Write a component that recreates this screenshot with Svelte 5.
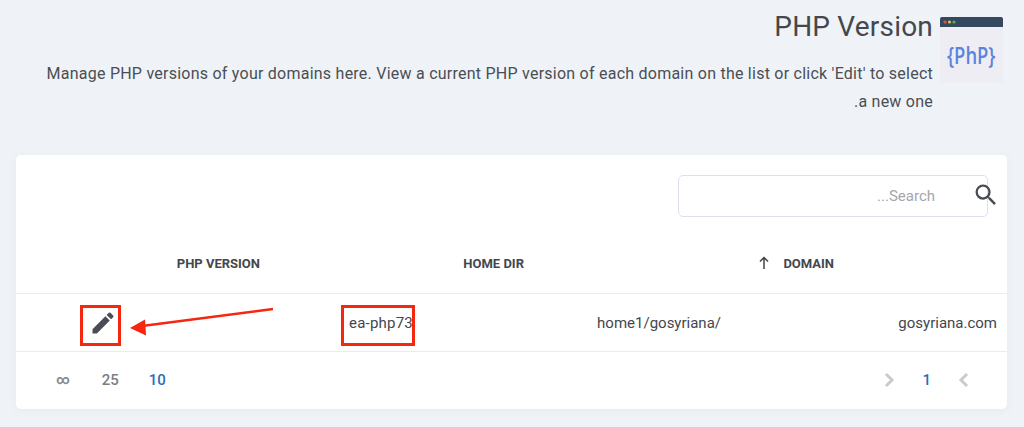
<script>
  const pageSizes = [
    { label: '10', active: true },
    { label: '25', active: false },
    { label: '∞', active: false, inf: true }
  ];
</script>

<div class="page" dir="rtl">
  <header class="head">
    <svg class="logo" viewBox="0 0 63 66" aria-hidden="true">
      <rect x="0" y="0" width="63" height="66" rx="2" fill="#eeedf3" />
      <path d="M0 10V2a2 2 0 0 1 2-2h59a2 2 0 0 1 2 2v8z" fill="#34495f" />
      <circle cx="5" cy="5" r="1.6" fill="#e0533f" />
      <circle cx="9.500" cy="5" r="1.600" fill="#e8b93a" />
      <circle cx="14" cy="5" r="1.600" fill="#4fb06a" />
      <text transform="translate(7 46.500) scale(0.8 1)" class="logo-text" direction="ltr" text-anchor="start">&#123;PhP&#125;</text>
    </svg>
    <div class="head-text">
      <h1>PHP Version</h1>
      <p>Manage PHP versions of your domains here. View a current PHP version of each domain on the list or click 'Edit' to select a new one.</p>
    </div>
  </header>

  <section class="card">
    <div class="toolbar">
      <div class="search">
        <input type="text" placeholder="Search..." />
        <svg class="search-icon" viewBox="0 0 24 24" aria-hidden="true">
          <path d="M15.500 14h-.79l-.28-.27A6.470 6.470 0 0 0 16 9.500 6.500 6.500 0 1 0 9.500 16c1.610 0 3.090-.59 4.230-1.570l.27.28v.79l5 4.990L20.490 19l-4.990-5zm-6 0C7.010 14 5 11.990 5 9.500S7.010 5 9.500 5 14 7.010 14 9.500 11.990 14 9.500 14z" />
        </svg>
      </div>
    </div>

    <div class="thead">
      <div class="th th-domain">
        <span>DOMAIN</span>
        <svg class="sort" viewBox="0 0 12 14" aria-hidden="true"><path d="M6 13V2M2 5.500 6 1.500l4 4" /></svg>
      </div>
      <div class="th th-home">HOME DIR</div>
      <div class="th th-php">PHP VERSION</div>
    </div>

    <div class="row">
      <div class="td td-domain">gosyriana.com</div>
      <div class="td td-home"><bdi>home1/gosyriana/</bdi></div>
      <div class="td td-php"><span class="mark mark-php">ea-php73</span></div>
      <div class="td td-edit">
        <span class="mark mark-edit">
          <svg viewBox="0 0 24 24" aria-hidden="true">
            <path d="M3 17.250V21h3.750L17.810 9.940l-3.750-3.750L3 17.250zM20.710 7.040a1 1 0 0 0 0-1.410l-2.340-2.340a1 1 0 0 0-1.410 0l-1.830 1.830 3.750 3.750 1.830-1.830z" />
          </svg>
        </span>
      </div>
    </div>

    <footer class="foot">
      <div class="pager">
        <svg class="chev" viewBox="0 0 12 16" aria-hidden="true"><path d="M9 2 3 8l6 6" /></svg>
        <span class="num active">1</span>
        <svg class="chev" viewBox="0 0 12 16" aria-hidden="true"><path d="M3 2l6 6-6 6" /></svg>
      </div>
      <div class="sizes">
        {#each pageSizes as s}
          <span class="num" class:active={s.active} class:inf={s.inf}>{s.label}</span>
        {/each}
      </div>
    </footer>

    <svg class="arrow" viewBox="0 0 150 30" aria-hidden="true">
      <path d="M145 2 14 19" />
      <polygon points="2,21 17,12.500 18,28.500" />
    </svg>
  </section>
</div>

<style>
  :global(body) {
    margin: 0;
    background: #eff3f7;
  }
  .page {
    width: 1024px;
    height: 427px;
    overflow: hidden;
    box-sizing: border-box;
    font-family: Roboto, "Liberation Sans", sans-serif;
    color: #43474d;
  }
  .head {
    display: flex;
    gap: 7px;
    padding: 17px 21px 0 0;
    height: 155px;
    box-sizing: border-box;
  }
  .logo {
    width: 63px;
    height: 66px;
    flex: none;
  }
  .logo-text {
    font-family: "Open Sans", sans-serif;
    font-size: 23px;
    font-weight: 600;
    fill: #5a83e0;
  }
  .head-text {
    flex: 1;
    padding-left: 42px;
  }
  h1 {
    margin: 0;
    font-size: 28px;
    font-weight: 400;
    line-height: 19px;
    letter-spacing: 0.2px;
    color: #44484d;
  }
  p {
    margin: 24px 0 0;
    font-size: 16px;
    letter-spacing: 0.24px;
    line-height: 28px;
    color: #4a4e54;
  }
  .card {
    position: relative;
    margin: 0 17px 0 16px;
    height: 254px;
    background: #fff;
    border-radius: 5px;
    box-shadow: 0 2px 8px rgba(60, 80, 110, 0.05);
  }
  .toolbar {
    display: flex;
    height: 80px;
    padding: 20px 19px 0 0;
    box-sizing: border-box;
  }
  .search {
    position: relative;
    width: 310px;
    height: 42px;
  }
  input {
    width: 100%;
    height: 100%;
    box-sizing: border-box;
    border: 1px solid #dde1ee;
    border-radius: 5px;
    padding: 0 52px 0 10px;
    background: #fff;
    font: 15px Roboto, sans-serif;
    outline: none;
  }
  input::placeholder {
    color: #a3a6ad;
    opacity: 1;
  }
  .search-icon {
    position: absolute;
    top: 6px;
    right: -12px;
    width: 28px;
    height: 28px;
    fill: #484c52;
  }
  .thead {
    display: flex;
    height: 59px;
    padding-bottom: 2px;
    align-items: center;
    padding-right: 173px;
    border-bottom: 1px solid #e9ebf0;
    box-sizing: border-box;
    font-size: 13px;
    font-weight: 700;
    color: #43474d;
  }
  .th-domain {
    display: flex;
    align-items: center;
    gap: 13px;
    width: 310px;
  }
  .th-home {
    width: 264px;
  }
  .sort {
    width: 12px;
    height: 14px;
    fill: none;
    stroke: #3f4348;
    stroke-width: 1.500;
  }
  .row {
    display: flex;
    height: 58px;
    align-items: center;
    padding-right: 10px;
    border-bottom: 1px solid #e9ebf0;
    box-sizing: border-box;
    font-size: 15px;
    color: #43474d;
  }
  .td-domain {
    width: 276px;
  }
  .td-home {
    width: 306px;
  }
  .td-php {
    width: 294px;
  }
  .mark {
    display: flex;
    align-items: center;
    justify-content: center;
    box-sizing: border-box;
    height: 41px;
    margin-top: 5px;
    padding-bottom: 5px;
    border: 3px solid #f5270f;
  }
  .mark-php {
    width: 74px;
    padding-left: 6px;
    letter-spacing: 0.2px;
    white-space: nowrap;
  }
  .mark-edit {
    width: 41px;
    padding-left: 5px;
  }
  .mark-edit svg {
    width: 28px;
    height: 28px;
    flex: none;
    fill: #4a4e54;
  }
  .foot {
    display: flex;
    justify-content: space-between;
    align-items: center;
    height: 57px;
    padding: 0 37px 2px 40px;
    box-sizing: border-box;
    font-size: 15px;
    font-weight: 500;
    color: #7b7e83;
  }
  .pager {
    display: flex;
    align-items: center;
    gap: 27px;
  }
  .sizes {
    display: flex;
    align-items: center;
    gap: 30px;
  }
  .num.active {
    color: #2c6cb8;
  }
  .inf {
    margin-right: 2px;
    font-size: 13px;
    font-weight: 700;
    color: #85888d;
  }
  .chev {
    width: 12px;
    height: 16px;
    fill: none;
    stroke: #c9cbce;
    stroke-width: 3;
  }
  .arrow {
    position: absolute;
    left: 112px;
    top: 152px;
    width: 150px;
    height: 30px;
  }
  .arrow path {
    stroke: #f5270f;
    stroke-width: 2.500;
    fill: none;
  }
  .arrow polygon {
    fill: #f5270f;
  }
</style>
